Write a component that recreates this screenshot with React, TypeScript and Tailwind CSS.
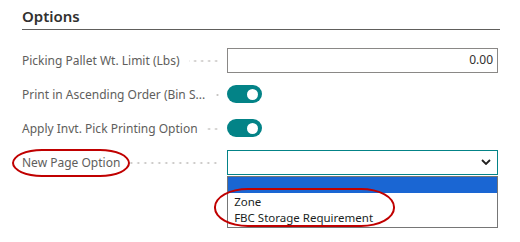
import React from "react";

const dots =
  "flex-1 h-[2px] bg-[radial-gradient(circle,#c8c6c4_1px,transparent_1.2px)] bg-[length:7px_2px] bg-repeat-x bg-right";

const Row = ({ label, children }: { label: string; children: React.ReactNode }) => (
  <div className="flex items-center h-[26px]">
    <div className="w-[206px] flex items-center pr-[8px] min-w-0 pt-[2px]">
      <span className="whitespace-nowrap text-[12px] text-[#605e5c] leading-[18px]">{label}</span>
      <span className={dots + " min-w-[7px] ml-[9px]"} />
    </div>
    <div className="w-[272px] flex items-center">{children}</div>
  </div>
);

const Toggle = () => (
  <div className="w-[35px] h-[18px] rounded-full bg-[#038387] flex items-center justify-end pr-[4px]">
    <div className="w-[11px] h-[11px] rounded-full bg-white" />
  </div>
);

export default function App() {
  return (
    <div className="relative w-[520px] h-[242px] bg-white px-[22px] font-['Noto_Sans',sans-serif] overflow-hidden">
      <div className="pt-[6px] pb-[3px] border-b border-[#605e5c] text-[15px] leading-[20px] font-semibold text-[#323130] w-[478px]">
        Options
      </div>

      <div className="mt-[17px] flex flex-col gap-[8px]">
        <Row label="Picking Pallet Wt. Limit (Lbs)">
          <div className="w-full h-[25px] border border-[#8a8886] flex items-center justify-end pr-[4px] text-[12px] text-[#323130]">
            0.00
          </div>
        </Row>
        <Row label="Print in Ascending Order (Bin S...">
          <Toggle />
        </Row>
        <Row label="Apply Invt. Pick Printing Option">
          <Toggle />
        </Row>
        <Row label="New Page Option">
          <div className="relative w-full">
            <div className="w-full h-[25px] border border-[#038387] flex items-center justify-end pr-[6px]">
              <svg width="10" height="6" viewBox="0 0 10 6" fill="none">
                <path d="M1 1l4 4 4-4" stroke="#201f1e" strokeWidth="1.8" />
              </svg>
            </div>
            <div className="absolute left-0 top-[26px] w-full border border-[#767676] bg-white text-[11.5px] leading-[16px] text-[#201f1e]">
              <div className="h-[16px] bg-[#1a66d3]" />
              <div className="pl-[6px] pt-[1px]">Zone</div>
              <div className="pl-[6px] pb-[1px]">FBC Storage Requirement</div>
            </div>
          </div>
        </Row>
      </div>

      <div className="absolute left-[12px] top-[149px] w-[118px] h-[28px] border-[2.5px] border-[#c00000] rounded-[30px/14px]" />
      <div className="absolute left-[214px] top-[188px] w-[181px] h-[39px] border-[2.5px] border-[#c00000] rounded-[34px/19px]" />
    </div>
  );
}
